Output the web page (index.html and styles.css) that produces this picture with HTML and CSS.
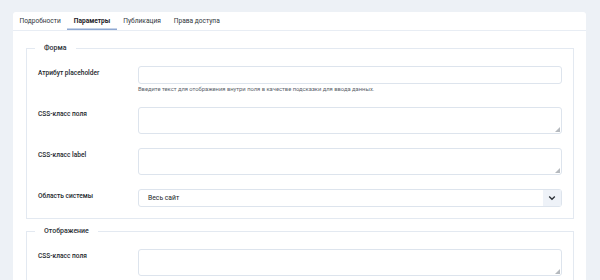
FILE: index.html
```html
<!DOCTYPE html>
<html lang="ru">
<head>
  <meta charset="UTF-8">
  <title>Параметры</title>
  <link rel="stylesheet" href="styles.css">
</head>
<body>
  <div class="card">
    <div class="tabs">
      <div class="tab">Подробности</div>
      <div class="tab active">Параметры</div>
      <div class="tab">Публикация</div>
      <div class="tab">Права доступа</div>
    </div>

    <div class="content">
      <fieldset class="group">
        <legend>Форма</legend>
        <div class="row">
          <label>Атрибут placeholder</label>
          <div class="control">
            <input type="text" class="field">
            <div class="hint">Введите текст для отображения внутри поля в качестве подсказки для ввода данных.</div>
          </div>
        </div>
        <div class="row">
          <label>CSS-класс поля</label>
          <div class="control grip"><textarea class="field area"></textarea></div>
        </div>
        <div class="row">
          <label>CSS-класс label</label>
          <div class="control grip"><textarea class="field area"></textarea></div>
        </div>
        <div class="row">
          <label>Область системы</label>
          <div class="control">
            <div class="select">
              <span>Весь сайт</span>
              <span class="caret">
                <svg width="8" height="6" viewBox="0 0 8 6"><path d="M1.2 1.5 L4 4.3 L6.8 1.5" fill="none" stroke="#2a2f36" stroke-width="1.3"/></svg>
              </span>
            </div>
          </div>
        </div>
      </fieldset>

      <fieldset class="group">
        <legend>Отображение</legend>
        <div class="row">
          <label>CSS-класс поля</label>
          <div class="control grip"><textarea class="field area"></textarea></div>
        </div>
      </fieldset>
    </div>
  </div>
</body>
</html>
```

FILE: styles.css
```css
/* Общие */
body {
  margin: 0;
  background: #edf1f6;
  font-family: Roboto, "Noto Sans", sans-serif;
  color: #22262a;
  height: 280px;
  overflow: hidden;
}

.card {
  margin: 12px 14px 0 13px;
  background: #fff;
  border-radius: 3px 3px 0 0;
  height: 300px;
}

/* Вкладки */
.tabs {
  display: flex;
  height: 18px;
  border-bottom: 1px solid #e8edf4;
}

.tab {
  padding: 0 6.5px;
  font-size: 6.6px;
  line-height: 18px;
  color: #30353b;
}

.tab.active {
  font-weight: 700;
  color: #1d2127;
  box-shadow: inset 0 -1.5px 0 #8ea8d2;
}

/* Содержимое */
.content {
  padding: 13px 12px 0 13px;
  display: flex;
  flex-direction: column;
  gap: 8px;
}

.group {
  margin: 0;
  padding: 14px 11px 11px 11px;
  border: 1px solid #e3e9f1;
  display: flex;
  flex-direction: column;
  gap: 14px;
}

.group legend {
  margin-left: -3px;
  padding: 0 9px;
  font-size: 7px;
  font-weight: 500;
  color: #2b3036;
}

.row {
  display: flex;
}

.row label {
  width: 100px;
  flex: none;
  font-size: 6.6px;
  font-weight: 500;
  line-height: 15px;
  color: #23272c;
}

.control {
  flex: 1;
}

.field {
  display: block;
  box-sizing: border-box;
  width: 100%;
  height: 18px;
  margin: 0;
  border: 1px solid #dde4ed;
  border-radius: 3px;
  background: #fff;
  font-family: inherit;
}

.area {
  height: 27px;
  resize: none;
}

/* Уголок для растягивания */
.grip {
  position: relative;
}

.grip::after {
  content: "";
  position: absolute;
  right: 2px;
  bottom: 2px;
  width: 0;
  height: 0;
  border-left: 5px solid transparent;
  border-bottom: 5px solid #b5b9be;
}

.hint {
  margin-top: 2px;
  font-size: 5.8px;
  line-height: 7px;
  color: #5c636b;
}

/* Выпадающий список */
.select {
  display: flex;
  align-items: center;
  box-sizing: border-box;
  height: 18px;
  border: 1px solid #dde4ed;
  border-radius: 3px;
  font-size: 6.8px;
  padding-left: 9px;
}

.select span:first-child {
  flex: 1;
}

.caret {
  width: 18px;
  height: 16px;
  background: #eef2f8;
  display: flex;
  align-items: center;
  justify-content: center;
}
```
